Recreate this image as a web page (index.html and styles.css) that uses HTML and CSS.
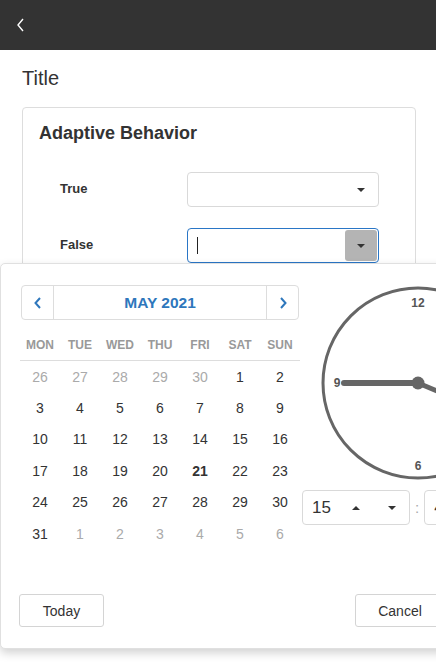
FILE: index.html
```html
<!DOCTYPE html>
<html lang="en">
<head>
<meta charset="utf-8">
<title>Adaptive Behavior</title>
<link rel="stylesheet" href="styles.css">
</head>
<body>
<header class="topbar">
  <svg class="back" width="10" height="14" viewBox="0 0 10 14"><path d="M7 1 L2 7 L7 13" fill="none" stroke="#fff" stroke-width="1.4"/></svg>
</header>
<main class="content">
  <h1 class="title">Title</h1>
  <section class="card">
    <h2 class="card-title">Adaptive Behavior</h2>
    <div class="row">
      <span class="label">True</span>
      <div class="select">
        <span class="caret-btn"><span class="caret"></span></span>
      </div>
    </div>
    <div class="row">
      <span class="label">False</span>
      <div class="select focused">
        <span class="cursor"></span>
        <span class="caret-btn active"><span class="caret"></span></span>
      </div>
    </div>
  </section>
</main>

<div class="popup">
  <div class="picker-body">
    <div class="calendar">
      <div class="nav">
        <span class="nav-btn prev"><svg width="8" height="12" viewBox="0 0 8 12"><path d="M6 1 L1.5 6 L6 11" fill="none" stroke="#2e77bc" stroke-width="2"/></svg></span>
        <span class="month">MAY 2021</span>
        <span class="nav-btn next"><svg width="8" height="12" viewBox="0 0 8 12"><path d="M2 1 L6.5 6 L2 11" fill="none" stroke="#2e77bc" stroke-width="2"/></svg></span>
      </div>
      <div class="weekdays">
        <span>MON</span><span>TUE</span><span>WED</span><span>THU</span><span>FRI</span><span>SAT</span><span>SUN</span>
      </div>
      <div class="days">
        <span class="other">26</span><span class="other">27</span><span class="other">28</span><span class="other">29</span><span class="other">30</span><span>1</span><span>2</span>
        <span>3</span><span>4</span><span>5</span><span>6</span><span>7</span><span>8</span><span>9</span>
        <span>10</span><span>11</span><span>12</span><span>13</span><span>14</span><span>15</span><span>16</span>
        <span>17</span><span>18</span><span>19</span><span>20</span><span class="today">21</span><span>22</span><span>23</span>
        <span>24</span><span>25</span><span>26</span><span>27</span><span>28</span><span>29</span><span>30</span>
        <span>31</span><span class="other">1</span><span class="other">2</span><span class="other">3</span><span class="other">4</span><span class="other">5</span><span class="other">6</span>
      </div>
    </div>
    <div class="clock-col">
      <svg class="clock" width="232" height="200" viewBox="0 0 232 200">
        <circle cx="116" cy="98" r="95" fill="none" stroke="#666" stroke-width="3"/>
        <text x="116" y="22" class="num">12</text>
        <text x="35" y="102" class="num">9</text>
        <text x="116" y="185" class="num">6</text>
        <line x1="42" y1="98" x2="116" y2="98" stroke="#666" stroke-width="6" stroke-linecap="round"/>
        <line x1="116" y1="98" x2="166" y2="119" stroke="#666" stroke-width="5" stroke-linecap="round"/>
        <circle cx="116" cy="98" r="6.5" fill="#666"/>
      </svg>
      <div class="time-row">
        <div class="spin">
          <span class="val">15</span>
          <span class="tri up"></span>
          <span class="tri down"></span>
        </div>
        <span class="colon">:</span>
        <div class="spin">
          <span class="val">45</span>
          <span class="tri up"></span>
          <span class="tri down"></span>
        </div>
      </div>
    </div>
  </div>
  <div class="footer">
    <button class="btn today-btn">Today</button>
    <div class="right-btns">
      <button class="btn cancel-btn">Cancel</button>
      <button class="btn ok-btn">OK</button>
    </div>
  </div>
</div>
</body>
</html>
```

FILE: styles.css
```css
html, body {
  margin: 0;
  padding: 0;
  overflow: hidden;
  background: #fff;
  font-family: "Liberation Sans", Arial, sans-serif;
  color: #333;
}

.topbar {
  height: 50px;
  background: #333;
  display: flex;
  align-items: center;
  padding-left: 16px;
}
.back { display: block; margin-top: -1px; }

.content {
  padding: 16px 21px 0 22px;
}
.title {
  margin: 0;
  font-size: 20px;
  line-height: 24px;
  font-weight: normal;
  color: #333;
}
.card {
  margin-top: 17px;
  width: 394px;
  box-sizing: border-box;
  height: 260px;
  border: 1px solid #ddd;
  border-radius: 4px;
  padding: 14px 16px 0 16px;
}
.card-title {
  margin: 0 0 28px 0;
  font-size: 18px;
  line-height: 22px;
  font-weight: bold;
  color: #333;
}
.row {
  display: flex;
  align-items: center;
  padding-left: 21px;
  margin-bottom: 21px;
}
.label {
  width: 127px;
  font-size: 13px;
  line-height: 15px;
  margin-top: -2px;
  font-weight: bold;
  color: #333;
}
.select {
  width: 192px;
  height: 35px;
  box-sizing: border-box;
  border: 1px solid #d9d9d9;
  border-radius: 4px;
  display: flex;
  align-items: center;
  justify-content: flex-end;
  padding: 1px;
  position: relative;
}
.select.focused {
  border-color: #2a76c6;
  justify-content: space-between;
}
.cursor {
  width: 1px;
  height: 17px;
  background: #222;
  margin-left: 8px;
}
.caret-btn {
  width: 32px;
  height: 31px;
  display: flex;
  align-items: center;
  justify-content: center;
  border-radius: 3px;
}
.caret-btn.active { background: #b4b4b4; }
.caret {
  width: 0;
  height: 0;
  border-left: 4px solid transparent;
  border-right: 4px solid transparent;
  border-top: 4px solid #333;
}

.popup {
  position: absolute;
  top: 263px;
  left: 0;
  width: 556px;
  height: 386px;
  box-sizing: border-box;
  background: #fff;
  border: 1px solid #e0e0e0;
  border-radius: 5px;
  box-shadow: 0 4px 10px rgba(0,0,0,0.18);
  display: flex;
  flex-direction: column;
}
.picker-body {
  display: flex;
  padding: 21px 0 0 19px;
}
.calendar { width: 280px; }
.nav {
  margin-left: 1px;
  width: 278px;
  height: 35px;
  box-sizing: border-box;
  border: 1px solid #ddd;
  border-radius: 4px;
  display: flex;
  align-items: stretch;
}
.nav-btn {
  width: 31px;
  display: flex;
  align-items: center;
  justify-content: center;
}
.nav-btn.prev { border-right: 1px solid #ddd; }
.nav-btn.next { border-left: 1px solid #ddd; }
.month {
  flex: 1;
  display: flex;
  align-items: center;
  justify-content: center;
  font-size: 15.5px;
  font-weight: bold;
  color: #2e77bc;
}
.weekdays {
  margin-top: 10px;
  height: 30px;
  border-bottom: 1px solid #ddd;
  display: grid;
  grid-template-columns: repeat(7, 40px);
  align-items: center;
}
.weekdays span {
  text-align: center;
  font-size: 12px;
  font-weight: bold;
  color: #999;
}
.days {
  display: grid;
  grid-template-columns: repeat(7, 40px);
  grid-auto-rows: 31.4px;
  align-items: center;
}
.days span {
  text-align: center;
  font-size: 14px;
  color: #333;
}
.days span.other { color: #aaa; }
.days span.today { font-weight: bold; }

.clock-col {
  margin-left: 2px;
  width: 232px;
}
.clock { display: block; }
.clock .num {
  font-family: "Liberation Sans", Arial, sans-serif;
  font-size: 12px;
  font-weight: bold;
  fill: #555;
  text-anchor: middle;
}
.time-row {
  margin-top: 5px;
  display: flex;
  align-items: center;
}
.spin {
  width: 108px;
  height: 35px;
  box-sizing: border-box;
  border: 1px solid #d9d9d9;
  border-radius: 4px;
  display: flex;
  align-items: center;
  padding-left: 9px;
}
.val {
  font-size: 17px;
  color: #333;
  width: 40px;
}
.tri {
  width: 0;
  height: 0;
  border-left: 4px solid transparent;
  border-right: 4px solid transparent;
}
.tri.up { border-bottom: 4px solid #333; }
.tri.down { border-top: 4px solid #333; margin-left: 28px; }
.colon {
  color: #aaa;
  font-size: 15px;
  margin: 0 5px 0 5px;
}

.footer {
  margin-top: auto;
  padding: 0 18px 21px 18px;
  display: flex;
  justify-content: space-between;
  align-items: center;
}
.right-btns { display: flex; gap: 8px; }
.btn {
  height: 33px;
  box-sizing: border-box;
  background: #fff;
  border: 1px solid #d4d4d4;
  border-radius: 3px;
  font-family: "Liberation Sans", Arial, sans-serif;
  font-size: 14px;
  color: #333;
  padding: 0;
}
.today-btn { width: 85px; }
.cancel-btn { width: 90px; }
.ok-btn { width: 84px; }
```
